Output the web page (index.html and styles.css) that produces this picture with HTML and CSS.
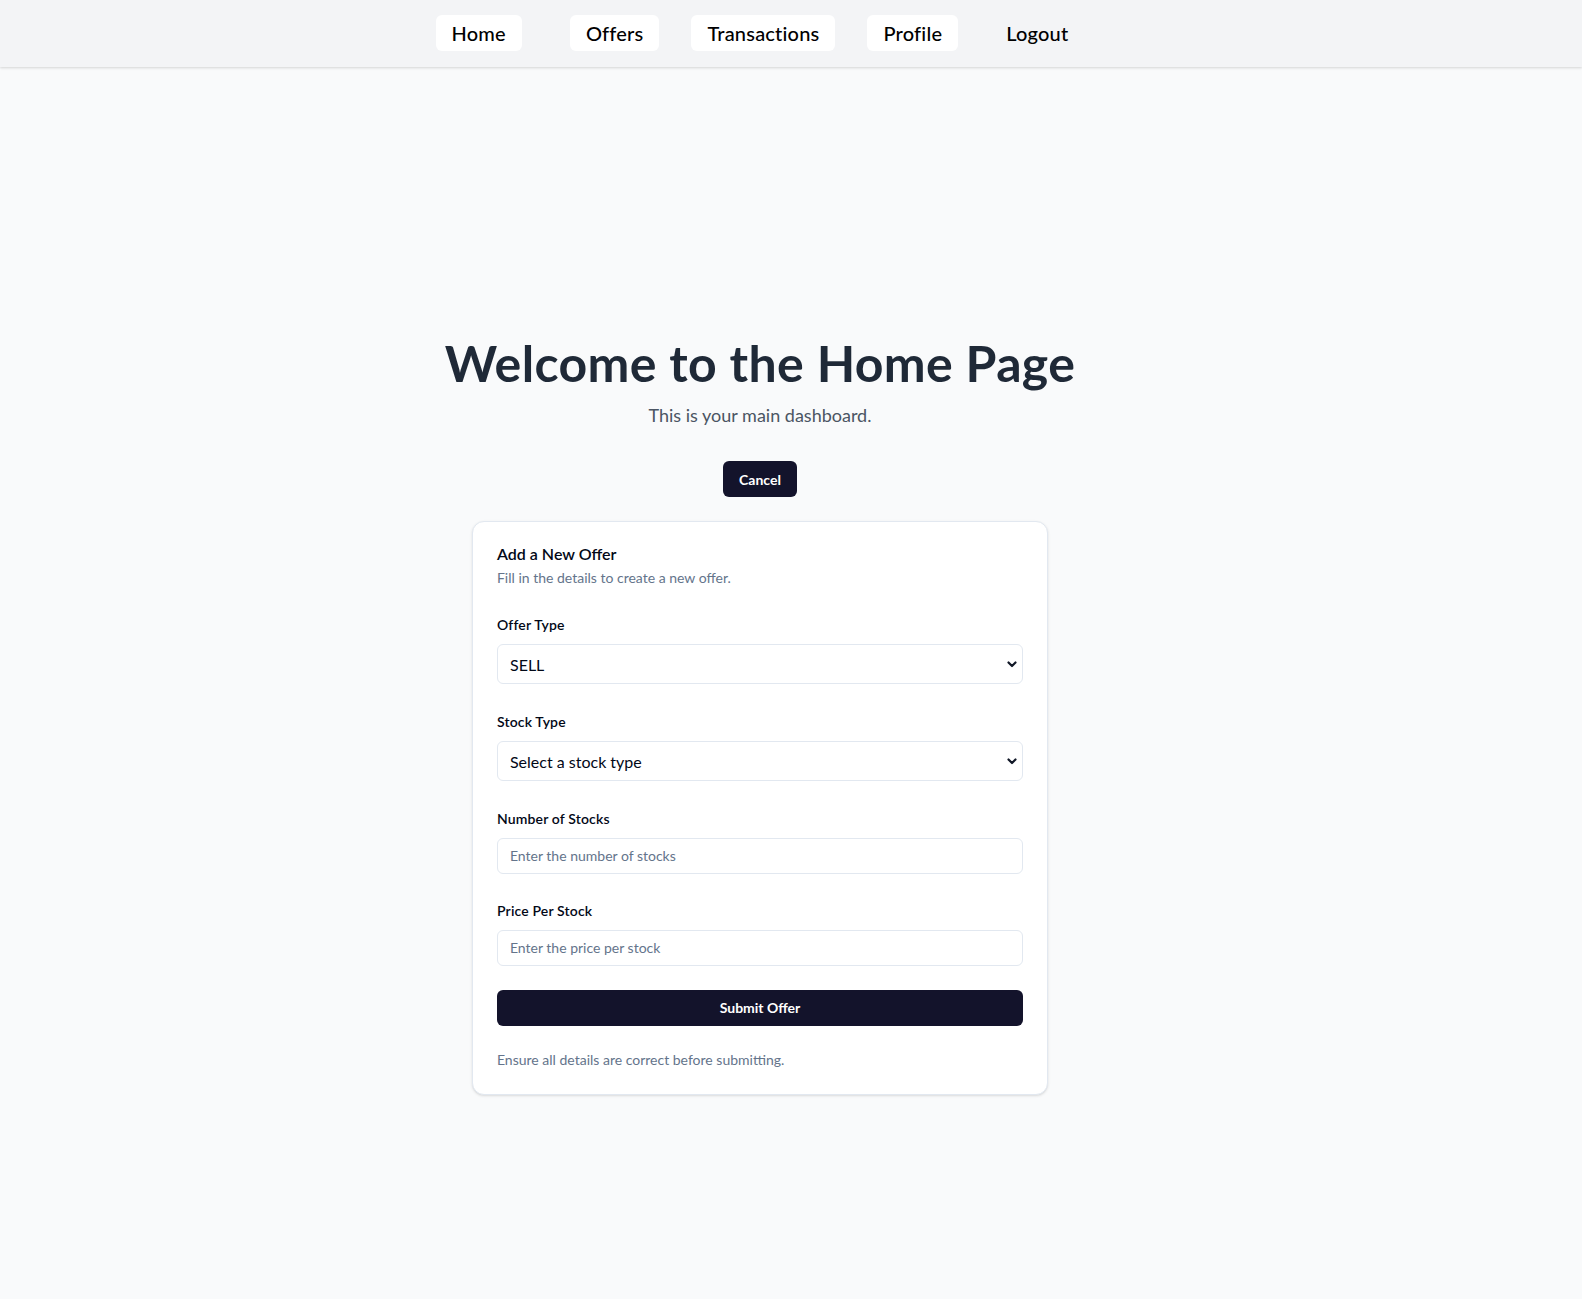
FILE: index.html
```html
<!DOCTYPE html>
<html lang="en">
<head>
<meta charset="utf-8">
<title>Home</title>
<link rel="stylesheet" href="styles.css">
</head>
<body>
<nav class="topnav">
  <div class="nav-inner">
    <a class="nav-link nav-home" href="#">Home</a>
    <a class="nav-link" href="#">Offers</a>
    <a class="nav-link" href="#">Transactions</a>
    <a class="nav-link" href="#">Profile</a>
    <a class="nav-link nav-plain" href="#">Logout</a>
  </div>
</nav>
<main class="main">
  <div class="hero">
    <h1 class="title">Welcome to the Home Page</h1>
    <p class="subtitle">This is your main dashboard.</p>
    <button class="btn btn-cancel" type="button">Cancel</button>
    <section class="card">
      <div class="card-header">
        <h2 class="card-title">Add a New Offer</h2>
        <p class="card-desc">Fill in the details to create a new offer.</p>
      </div>
      <div class="card-content">
        <form class="form">
          <div class="field">
            <label class="label">Offer Type</label>
            <div class="select-wrap">
              <select class="control select"><option>SELL</option><option>BUY</option></select>
              <svg class="chev" width="10" height="7" viewBox="0 0 10 7"><path d="M1.5 1.5l3.5 3.5 3.5-3.5" fill="none" stroke="#111827" stroke-width="2.2" stroke-linecap="round" stroke-linejoin="round"/></svg>
            </div>
          </div>
          <div class="field">
            <label class="label">Stock Type</label>
            <div class="select-wrap">
              <select class="control select"><option>Select a stock type</option></select>
              <svg class="chev" width="10" height="7" viewBox="0 0 10 7"><path d="M1.5 1.5l3.5 3.5 3.5-3.5" fill="none" stroke="#111827" stroke-width="2.2" stroke-linecap="round" stroke-linejoin="round"/></svg>
            </div>
          </div>
          <div class="field">
            <label class="label">Number of Stocks</label>
            <input class="control input" type="text" placeholder="Enter the number of stocks">
          </div>
          <div class="field">
            <label class="label">Price Per Stock</label>
            <input class="control input" type="text" placeholder="Enter the price per stock">
          </div>
          <button class="btn btn-submit" type="button">Submit Offer</button>
        </form>
      </div>
      <p class="card-foot">Ensure all details are correct before submitting.</p>
    </section>
  </div>
</main>
</body>
</html>
```

FILE: styles.css
```css
* { box-sizing: border-box; }
body {
  margin: 0;
  font-family: Lato, "Open Sans", sans-serif;
  background: #f9fafb;
  color: #020817;
  line-height: 1.5;
}
.topnav {
  background: #f3f4f6;
  height: 67px;
  box-shadow: 0 1px 3px rgba(0,0,0,0.1), 0 1px 2px rgba(0,0,0,0.06);
  position: relative;
  z-index: 1;
}
.nav-inner {
  display: flex;
  justify-content: center;
  align-items: flex-start;
  gap: 32px;
  height: 100%;
  padding: 15px 62px 0 0;
}
.nav-link {
  display: inline-flex;
  align-items: center;
  height: 36px;
  padding: 0 16px;
  background: #fff;
  border-radius: 6px;
  font-size: 20px;
  font-weight: 500;
  letter-spacing: 0.2px;
  color: #000;
  text-decoration: none;
}
.nav-home { margin-right: 16px; }
.nav-plain { background: transparent; }
.main {
  min-height: 100vh;
  display: flex;
  flex-direction: column;
  align-items: center;
  justify-content: center;
  padding-right: 62px;
}
.hero {
  display: flex;
  flex-direction: column;
  align-items: center;
}
.title {
  font-size: 50px;
  line-height: 50px;
  font-weight: 700;
  letter-spacing: 0.35px;
  color: #1f2937;
  margin: 0 0 13px;
}
.subtitle {
  font-size: 18px;
  line-height: 28px;
  color: #4b5563;
  margin: 0 0 32px;
}
.btn {
  border: 0;
  border-radius: 6px;
  background: #13132b;
  color: #fff;
  font-family: inherit;
  font-size: 14px;
  font-weight: 700;
  height: 36px;
  padding: 0 16px;
}
.btn-cancel { margin-bottom: 24px; }
.card {
  width: 576px;
  background: #fff;
  border: 1px solid #e2e8f0;
  border-radius: 12px;
  box-shadow: 0 1px 3px rgba(0,0,0,0.1), 0 1px 2px -1px rgba(0,0,0,0.1);
}
.card-header {
  padding: 24px;
  display: flex;
  flex-direction: column;
  gap: 6px;
}
.card-title {
  margin: 0;
  font-size: 16px;
  line-height: 16px;
  font-weight: 600;
}
.card-desc {
  margin: 0;
  font-size: 14px;
  line-height: 20px;
  color: #64748b;
}
.card-content { padding: 0 24px 24px; }
.form {
  display: flex;
  flex-direction: column;
  gap: 24px;
}
.field {
  display: flex;
  flex-direction: column;
  gap: 8px;
}
.label {
  font-size: 14px;
  font-weight: 600;
  letter-spacing: 0.15px;
  line-height: 23px;
  padding-top: 1px;
}
.select-wrap {
  position: relative;
  padding-bottom: 0.75px;
}
.control {
  width: 100%;
  border: 1px solid #e2e8f0;
  border-radius: 6px;
  background: #fff;
  padding: 0 12px;
  font-family: inherit;
  color: #020817;
}
.select {
  display: block;
  appearance: none;
  -webkit-appearance: none;
  height: 40px;
  font-size: 16px;
}
.input {
  height: 36px;
  font-size: 14px;
}
.input::placeholder { color: #64748b; }
.chev {
  position: absolute;
  right: 6px;
  top: 17px;
  pointer-events: none;
}
.btn-submit { width: 100%; }
.card-foot {
  margin: 0;
  padding: 0 24px 24px;
  font-size: 14px;
  line-height: 20px;
  color: #64748b;
}
```
